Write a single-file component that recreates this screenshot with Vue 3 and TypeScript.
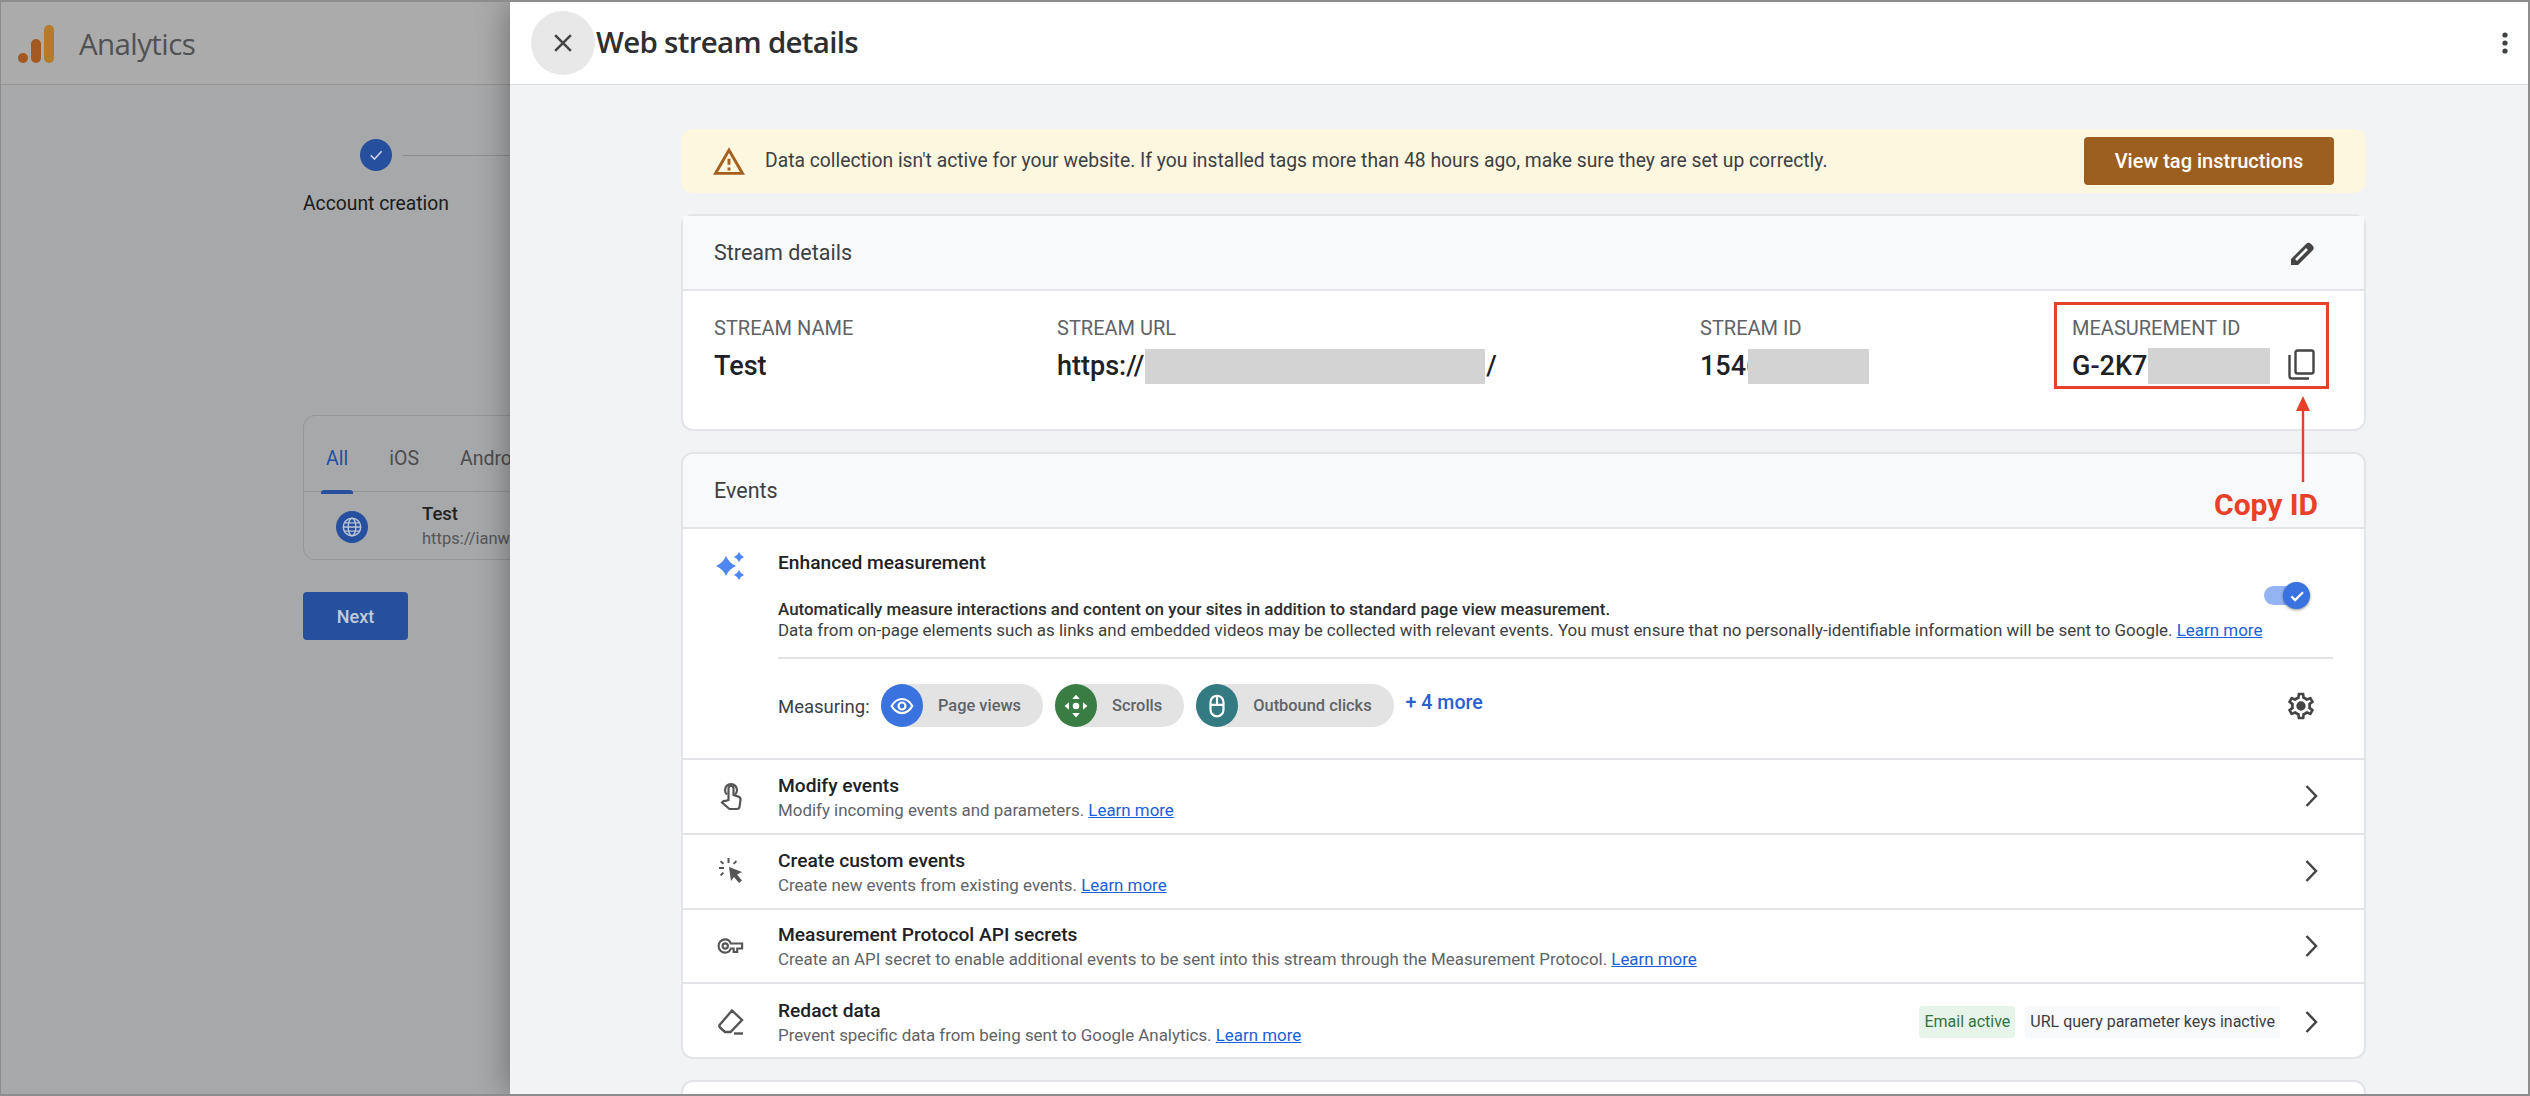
<template>
  <div class="frame">
    <section class="backdrop">
      <header class="app-bar">
        <svg class="logo" width="36" height="38" viewBox="0 0 36 38">
          <circle cx="5" cy="33" r="5" fill="#a3591f" />
          <rect x="13" y="14" width="10" height="24" rx="5" fill="#a3591f" />
          <rect x="26" y="0" width="10" height="38" rx="5" fill="#b27c2a" />
        </svg>
        <span class="app-name">Analytics</span>
      </header>
      <div class="setup">
        <div class="stepper">
          <span class="step-dot">
            <svg width="18" height="18" viewBox="0 0 24 24"><path d="M5 12.5l5 5L19.5 7" fill="none" stroke="#c9d3e6" stroke-width="2" /></svg>
          </span>
          <span class="step-line"></span>
        </div>
        <div class="step-label">Account creation</div>
        <div class="stream-list">
          <div class="tabs">
            <span class="tab active">All</span>
            <span class="tab">iOS</span>
            <span class="tab">Android</span>
          </div>
          <div class="stream-row">
            <span class="globe">
              <svg width="22" height="22" viewBox="0 0 24 24" fill="none" stroke="#b9c4d8" stroke-width="1.6">
                <circle cx="12" cy="12" r="9.5" />
                <ellipse cx="12" cy="12" rx="4.2" ry="9.5" />
                <path d="M2.5 12h19M3.8 7.5h16.4M3.8 16.5h16.4" />
              </svg>
            </span>
            <div>
              <div class="stream-title">Test</div>
              <div class="stream-url">https://ianwilson.example.com</div>
            </div>
          </div>
        </div>
        <div class="next-btn">Next</div>
      </div>
    </section>

    <section class="panel">
      <header class="panel-bar">
        <span class="close-btn">
          <svg width="30" height="30" viewBox="0 0 24 24"><path fill="#444" d="M19 6.41L17.59 5 12 10.59 6.41 5 5 6.41 10.59 12 5 17.59 6.41 19 12 13.41 17.59 19 19 17.59 13.41 12z" /></svg>
        </span>
        <h1 class="panel-title">Web stream details</h1>
        <svg class="kebab" width="6" height="22" viewBox="0 0 6 22"><circle cx="3" cy="3" r="2.6" /><circle cx="3" cy="11" r="2.6" /><circle cx="3" cy="19" r="2.6" /></svg>
      </header>

      <div class="content">
        <div class="banner">
          <svg class="warn" width="32" height="30" viewBox="1 2 22 19"><path fill="#a3601f" d="M12 5.99L19.53 19H4.47L12 5.99M12 2L1 21h22L12 2zm1 14h-2v2h2v-2zm0-6h-2v4h2v-4z" /></svg>
          <span class="banner-text">Data collection isn't active for your website. If you installed tags more than 48 hours ago, make sure they are set up correctly.</span>
          <span class="banner-btn">View tag instructions</span>
        </div>

        <div class="card details">
          <div class="card-head">
            <span>Stream details</span>
            <svg class="pencil" width="24" height="24" viewBox="0 0 24 24">
              <path d="M1 24v-6L16 3a3.500 3.500 0 0 1 5 0l1.500 1.500a3.500 3.500 0 0 1 0 5L8 24z" fill="#444" />
              <path d="M6 19L17 8" fill="none" stroke="#f8f9fa" stroke-width="2.600" />
            </svg>
          </div>
          <div class="fields">
            <div class="field f-name">
              <div class="field-label">STREAM NAME</div>
              <div class="field-value">Test</div>
            </div>
            <div class="field f-url">
              <div class="field-label">STREAM URL</div>
              <div class="field-value">https://<span class="blur w-url"></span>/</div>
            </div>
            <div class="field f-id">
              <div class="field-label">STREAM ID</div>
              <div class="field-value"><span class="clip">1546</span><span class="blur w-id"></span></div>
            </div>
            <div class="field f-mid">
              <div class="field-label">MEASUREMENT ID</div>
              <div class="field-value">G-2K7<span class="blur w-mid"></span></div>
              <svg class="copy" width="27" height="31" viewBox="0 0 27 31" fill="none" stroke="#444" stroke-width="2.400">
                <rect x="7.500" y="1.500" width="18" height="23" rx="2" />
                <path d="M1.500 6v21a2.500 2.500 0 0 0 2.500 2.500H21" />
              </svg>
            </div>
            <div class="mark-box"></div>
            <svg class="mark-arrow" width="16" height="86" viewBox="0 0 16 86">
              <path d="M8 0L15 15H9.200V86H6.800V15H1z" fill="#e8412a" />
            </svg>
          </div>
        </div>

        <div class="card events">
          <div class="card-head"><span>Events</span></div>
          <div class="enhanced">
            <svg class="sparkle" width="32" height="30" viewBox="0 0 32 30" fill="#4f86f0">
              <path d="M11 4Q14 11 21 14 14 17 11 24 8 17 1 14 8 11 11 4z" />
              <path d="M24 0Q25.500 3.500 29 5 25.500 6.500 24 10 22.500 6.500 19 5 22.500 3.500 24 0z" />
              <path d="M24 18Q25.500 21.500 29 23 25.500 24.500 24 28 22.500 24.500 19 23 22.500 21.500 24 18z" />
            </svg>
            <div class="enhanced-body">
              <div class="row-title">Enhanced measurement</div>
              <p class="enhanced-desc">
                <span class="strong-line">Automatically measure interactions and content on your sites in addition to standard page view measurement.</span><br />
                Data from on-page elements such as links and embedded videos may be collected with relevant events. You must ensure that no personally-identifiable information will be sent to Google. <a class="link">Learn more</a>
              </p>
              <span class="toggle"><span class="toggle-knob"><svg width="18" height="18" viewBox="0 0 24 24"><path d="M4.500 12.500l5 5L20 7" fill="none" stroke="#fff" stroke-width="3" /></svg></span></span>
              <div class="measuring">
                <span class="measuring-label">Measuring:</span>
                <span class="chip">
                  <span class="chip-disc c-blue">
                    <svg width="26" height="26" viewBox="0 0 24 24" fill="none" stroke="#fff" stroke-width="2"><path d="M2.500 12C5 7.500 8.200 5.500 12 5.500s7 2 9.500 6.500c-2.500 4.500-5.700 6.500-9.500 6.500S5 16.500 2.500 12z" /><circle cx="12" cy="12" r="3.200" /></svg>
                  </span>
                  <span class="chip-text">Page views</span>
                </span>
                <span class="chip">
                  <span class="chip-disc c-green">
                    <svg width="26" height="26" viewBox="0 0 24 24" fill="#fff"><circle cx="12" cy="12" r="3" /><path d="M12 1.500l3.500 4h-7zM12 22.500l-3.500-4h7zM1.500 12l4-3.500v7zM22.500 12l-4 3.500v-7z" /></svg>
                  </span>
                  <span class="chip-text">Scrolls</span>
                </span>
                <span class="chip">
                  <span class="chip-disc c-teal">
                    <svg width="26" height="26" viewBox="0 0 24 24" fill="none" stroke="#fff" stroke-width="2"><rect x="6" y="2.500" width="12" height="19" rx="6" /><path d="M6 11h12M12 2.500V11" /></svg>
                  </span>
                  <span class="chip-text">Outbound clicks</span>
                </span>
                <a class="more">+ 4 more</a>
                <svg class="gear" width="32" height="32" viewBox="0 0 24 24"><path fill="#444" d="M19.430 12.980c.04-.32.07-.64.07-.98 0-.34-.03-.66-.07-.98l2.110-1.650c.19-.15.24-.42.12-.64l-2-3.460c-.09-.16-.26-.25-.44-.25-.06 0-.12.01-.17.03l-2.490 1c-.52-.4-1.080-.73-1.690-.98l-.38-2.650C14.460 2.180 14.250 2 14 2h-4c-.25 0-.46.18-.49.42l-.38 2.650c-.61.25-1.170.59-1.690.98l-2.490-1c-.06-.02-.12-.03-.18-.03-.17 0-.34.09-.43.25l-2 3.460c-.13.22-.07.49.12.64l2.110 1.650c-.04.32-.07.65-.07.98 0 .33.03.66.07.98l-2.110 1.650c-.19.15-.24.42-.12.64l2 3.460c.09.16.26.25.44.25.06 0 .12-.01.17-.03l2.490-1c.52.4 1.080.73 1.690.98l.38 2.650c.03.24.24.42.49.42h4c.25 0 .46-.18.49-.42l.38-2.650c.61-.25 1.170-.59 1.690-.98l2.490 1c.06.02.12.03.18.03.17 0 .34-.09.43-.25l2-3.460c.12-.22.07-.49-.12-.64l-2.110-1.650zm-1.980-1.710c.04.31.05.52.05.73 0 .21-.02.43-.05.73l-.14 1.130.89.7 1.080.84-.7 1.210-1.270-.51-1.040-.42-.9.68c-.43.32-.84.56-1.250.73l-1.060.43-.16 1.130-.2 1.350h-1.400l-.19-1.350-.16-1.130-1.060-.43c-.43-.18-.83-.41-1.230-.71l-.91-.7-1.060.43-1.270.51-.7-1.210 1.080-.84.89-.7-.14-1.130c-.03-.31-.05-.54-.05-.74s.02-.43.05-.73l.14-1.130-.89-.7-1.080-.84.7-1.210 1.270.51 1.040.42.9-.68c.43-.32.84-.56 1.250-.73l1.060-.43.16-1.130.2-1.350h1.390l.19 1.350.16 1.130 1.060.43c.43.18.83.41 1.230.71l.91.7 1.060-.43 1.270-.51.7 1.210-1.070.85-.89.7.14 1.130zM12 8.500a3.500 3.500 0 1 0 0 7 3.500 3.500 0 0 0 0-7z" /></svg>
              </div>
            </div>
          </div>

          <div v-for="row in rows" :key="row.title" class="nav-row">
            <span class="nav-icon">
              <svg v-if="row.icon === 'touch'" width="24" height="30" viewBox="0 0 24 30" fill="none" stroke="#555" stroke-width="2.200">
                <path d="M8 13.500a6 6 0 1 1 8 0" />
                <path d="M9.500 19V7.500a2.500 2.500 0 0 1 5 0V14l5 1.600a3 3 0 0 1 2 3.300l-1 7a2.500 2.500 0 0 1-2.500 2.100H10.500L3 21.500l1-1a2 2 0 0 1 2-.5z" />
              </svg>
              <svg v-else-if="row.icon === 'click'" width="26" height="28" viewBox="0 0 26 28" fill="#555">
                <path d="M11 10l13 5-5 2.500 5 6-3 2.500-5-6L13 24z" />
                <rect x="9.500" y="1" width="2" height="5" />
                <rect x="1" y="10" width="5" height="2" />
                <rect x="3" y="3.500" width="2" height="4" transform="rotate(-45 4 5.500)" />
                <rect x="16" y="3.500" width="2" height="4" transform="rotate(45 17 5.500)" />
                <rect x="3" y="15" width="2" height="4" transform="rotate(45 4 17)" />
              </svg>
              <svg v-else-if="row.icon === 'key'" width="28" height="16" viewBox="0 0 28 18" fill="none" stroke="#555" stroke-width="2.400">
                <circle cx="7.500" cy="9" r="3" />
                <path d="M13.800 6.200C12.800 3.400 10.400 1.500 7.500 1.500a7.500 7.500 0 0 0 0 15c2.900 0 5.300-1.900 6.300-4.700H17v4h4v-4h5.500V6.200z" />
              </svg>
              <svg v-else width="28" height="28" viewBox="0 0 28 28" fill="none" stroke="#555" stroke-width="2.400">
                <path d="M15 2.500L25 12 13.500 24H8L3 19.500a2 2 0 0 1 0-3z" />
                <path d="M17 25.500h9" />
              </svg>
            </span>
            <div class="nav-text">
              <div class="row-title">{{ row.title }}</div>
              <div class="row-sub">{{ row.sub }} <a class="link">Learn more</a></div>
            </div>
            <template v-if="row.tags">
              <span class="tag tag-on">Email active</span>
              <span class="tag tag-off">URL query parameter keys inactive</span>
            </template>
            <svg class="chevron" width="14" height="24" viewBox="0 0 14 24"><path d="M2.500 2L12 12 2.500 22" fill="none" stroke="#444" stroke-width="2.500" /></svg>
          </div>
        </div>

        <div class="card stub"></div>
      </div>
      <div class="copy-note">Copy ID</div>
    </section>
  </div>
</template>

<script setup lang="ts">
interface NavRow {
  title: string;
  sub: string;
  icon: 'touch' | 'click' | 'key' | 'eraser';
  tags?: boolean;
}

const rows: NavRow[] = [
  { title: 'Modify events', sub: 'Modify incoming events and parameters.', icon: 'touch' },
  { title: 'Create custom events', sub: 'Create new events from existing events.', icon: 'click' },
  {
    title: 'Measurement Protocol API secrets',
    sub: 'Create an API secret to enable additional events to be sent into this stream through the Measurement Protocol.',
    icon: 'key',
  },
  { title: 'Redact data', sub: 'Prevent specific data from being sent to Google Analytics.', icon: 'eraser', tags: true },
];
</script>

<style>
html, body { margin: 0; background: #fff; }
</style>

<style scoped>
.frame { box-sizing: border-box; width: 2530px; height: 1096px; display: flex; overflow: hidden; border: solid #8d8d8d; border-width: 2px 2px 2px 1px; font-family: Roboto, "Liberation Sans", sans-serif; color: #202124; }

.backdrop { width: 509px; flex: none; background: #a7a8aa; overflow: hidden; }
.app-bar { height: 82px; display: flex; align-items: center; background: #ababab; border-bottom: 1px solid #949494; padding-left: 17px; gap: 25px; }
.logo { margin-top: 2px; }
.app-name { font: 400 29.500px "Open Sans", Roboto, sans-serif; letter-spacing: -0.6px; color: #505152; }
.setup { padding-left: 302px; width: 500px; }
.stepper { display: flex; align-items: center; margin: 54px 0 0 57px; }
.step-dot { width: 32px; height: 32px; border-radius: 50%; background: #264f9e; display: flex; align-items: center; justify-content: center; flex: none; }
.step-line { width: 130px; height: 1px; background: #8e8f91; margin-left: 10px; }
.step-label { margin-top: 21px; font-size: 19.300px; line-height: 24px; color: #1b1b1c; white-space: nowrap; }
.stream-list { width: 500px; height: 145px; margin-top: 199px; box-sizing: border-box; border: 1px solid #959697; border-radius: 12px; }
.tabs { height: 75px; display: flex; align-items: center; gap: 41px; padding: 0 0 0 22px; border-bottom: 1px solid #949597; font-size: 19.500px; color: #4b4c4e; }
.tab { position: relative; padding-top: 9px; }
.tab.active { color: #264f9e; }
.tab.active::after { content: ""; position: absolute; left: -5px; right: -5px; top: 52px; height: 4px; background: #264f9e; border-radius: 3px 3px 0 0; }
.stream-row { display: flex; align-items: center; gap: 54px; padding: 0 0 0 32px; height: 69px; }
.globe { width: 32px; height: 32px; border-radius: 50%; background: #264f9e; display: flex; align-items: center; justify-content: center; }
.stream-title { font-size: 18.500px; font-weight: 500; color: #222; line-height: 24px; }
.stream-url { font-size: 16.500px; color: #555658; line-height: 26px; white-space: nowrap; }
.next-btn { width: 105px; height: 48px; margin-top: 32px; border-radius: 4px; background: #264f9e; color: #c4cbd8; font-size: 18px; font-weight: 500; display: flex; align-items: center; justify-content: center; }

.panel { flex: 1; position: relative; z-index: 1; background: #f1f3f4; box-shadow: 0 0 32px rgba(0, 0, 0, 0.38); min-width: 0; }
.panel-bar { height: 82px; display: flex; align-items: center; background: #fff; border-bottom: 1px solid #dadce0; padding: 0 20px 0 21px; }
.close-btn { width: 64px; height: 64px; border-radius: 50%; background: #e8e8e8; display: flex; align-items: center; justify-content: center; flex: none; }
.panel-title { margin: -3px 0 0 1px; font: 600 29.500px "Open Sans", Roboto, sans-serif; letter-spacing: -0.7px; color: #2d2e30; }
.kebab { margin-left: auto; fill: #3c4043; }

.content { width: 1685px; margin-left: 171px; padding-top: 44px; }
.banner { height: 64px; box-sizing: border-box; border-radius: 12px; background: #fef7e0; display: flex; align-items: center; padding: 0 32px 0 32px; }
.banner-text { margin: -1px 0 0 20px; font-size: 19.300px; color: #3c4043; white-space: nowrap; }
.banner-btn { margin-left: auto; width: 250px; height: 48px; border-radius: 4px; background: #9c5f1f; color: #fff; font-size: 20px; font-weight: 500; display: flex; align-items: center; justify-content: center; }

.card { box-sizing: border-box; background: #fff; border: 2px solid #e2e4e8; border-radius: 12px; overflow: hidden; margin-top: 21px; }
.card-head { height: 75px; box-sizing: border-box; background: #f8f9fa; border-bottom: 2px solid #e2e4e8; display: flex; align-items: center; justify-content: space-between; padding: 0 50px 0 31px; font-size: 21.500px; color: #3c4043; }
.details { height: 217px; position: relative; overflow: visible; }
.fields { display: flex; padding: 23px 0 0 31px; height: 140px; box-sizing: border-box; position: relative; }
.f-name { width: 343px; }
.f-url { width: 643px; }
.f-id { width: 372px; }
.f-mid { position: relative; flex: 1; }
.field-label { font-size: 20px; line-height: 28px; color: #5f6368; }
.field-value { display: flex; align-items: center; font-size: 27px; font-weight: 500; line-height: 36px; height: 36px; margin-top: 6px; color: #202124; white-space: nowrap; }
.blur { display: block; height: 35px; background: #d3d3d3; }
.w-url { width: 340px; margin: 0 1px; }
.w-id { width: 121px; }
.clip { width: 48px; overflow: hidden; }
.w-mid { width: 122px; margin-left: 1px; height: 36px; }
.copy { position: absolute; left: 216px; top: 35px; }
.mark-box { position: absolute; left: 1371px; top: 11px; width: 275px; height: 87px; box-sizing: border-box; border: 3px solid #e8412a; pointer-events: none; }
.mark-arrow { position: absolute; left: 1612px; top: 105px; z-index: 2; }
.copy-note { position: absolute; left: 1704px; top: 485px; color: #e8412a; font-size: 30px; font-weight: 700; z-index: 3; }

.events { height: 607px; }
.enhanced { display: flex; height: 231px; box-sizing: border-box; border-bottom: 2px solid #e2e4e8; padding: 22px 0 0 32px; position: relative; }
.sparkle { flex: none; margin-top: 1px; }
.enhanced-body { margin-left: 31px; flex: 1; padding-right: 31px; }
.row-title { font-size: 19.200px; font-weight: 500; line-height: 24px; color: #202124; white-space: nowrap; }
.enhanced-desc { margin: 24px 0 0; font-size: 16.950px; line-height: 21px; color: #3c4043; padding-bottom: 16px; border-bottom: 2px solid #e2e4e8; }
.strong-line { font-weight: 500; color: #2c2d30; }
.link { color: #1a5fd8; text-decoration: underline; }
.toggle { position: absolute; left: 1581px; top: 57px; width: 36px; height: 19px; border-radius: 10px; background: #94b3f2; }
.toggle-knob { position: absolute; right: -10px; top: -4px; width: 27px; height: 27px; border-radius: 50%; background: #3a72e0; box-shadow: 0 1px 3px rgba(0, 0, 0, 0.45); display: flex; align-items: center; justify-content: center; }
.measuring { display: flex; align-items: center; margin-top: 25px; }
.measuring-label { width: 103px; font-size: 18.500px; color: #3c4043; padding-top: 3px; }
.chip { height: 43px; display: flex; align-items: center; background: #e3e3e3; border-radius: 22px; margin-right: 12px; padding-right: 22px; }
.chip-disc { width: 42px; height: 43px; border-radius: 50%; display: flex; align-items: center; justify-content: center; margin-right: 15px; }
.c-blue { background: #3a72e0; }
.c-green { background: #3a7d44; }
.c-teal { background: #337a82; }
.chip-text { font-size: 16.400px; font-weight: 500; color: #5f6368; margin-top: -1px; }
.more { margin-top: -6px; font-size: 19.600px; font-weight: 500; color: #2b5fd0; }
.gear { margin-left: auto; margin-right: 16px; }

.nav-row { height: 74.750px; box-sizing: border-box; display: flex; align-items: center; border-bottom: 2px solid #e2e4e8; padding: 0 46px 0 32px; }
.nav-row:nth-last-child(1) { border-bottom: none; }
.nav-icon { width: 32px; margin-right: 31px; display: flex; justify-content: center; }
.nav-text { flex: 1; margin-top: 3px; }
.row-sub { font-size: 16.900px; line-height: 24px; color: #5f6368; }
.tag { height: 32px; display: flex; align-items: center; padding: 0 5px; border-radius: 3px; font-size: 16px; }
.tag-on { background: #e6f4ea; color: #34753f; margin-right: 10px; }
.tag-off { background: #f8f9fa; color: #3c4043; }
.chevron { margin-left: 24px; flex: none; }
.stub { height: 40px; }
</style>
